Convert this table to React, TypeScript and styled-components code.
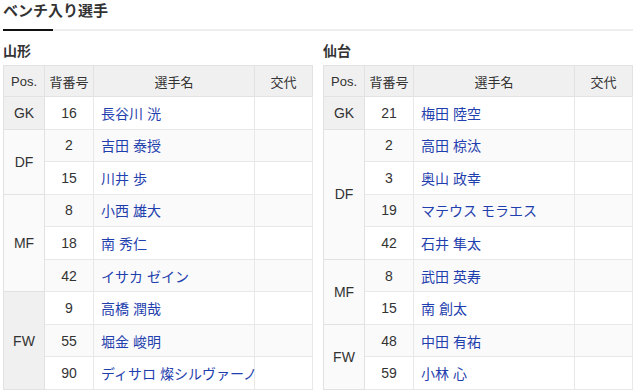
import React from "react";
import styled, { createGlobalStyle } from "styled-components";

type Player = { no: number; name: string };
type Group = { pos: string; players: Player[] };
type Team = { name: string; groups: Group[] };

const teams: Team[] = [
  {
    name: "山形",
    groups: [
      { pos: "GK", players: [{ no: 16, name: "長谷川 洸" }] },
      {
        pos: "DF",
        players: [
          { no: 2, name: "吉田 泰授" },
          { no: 15, name: "川井 歩" },
        ],
      },
      {
        pos: "MF",
        players: [
          { no: 8, name: "小西 雄大" },
          { no: 18, name: "南 秀仁" },
          { no: 42, name: "イサカ ゼイン" },
        ],
      },
      {
        pos: "FW",
        players: [
          { no: 9, name: "高橋 潤哉" },
          { no: 55, name: "堀金 峻明" },
          { no: 90, name: "ディサロ 燦シルヴァーノ" },
        ],
      },
    ],
  },
  {
    name: "仙台",
    groups: [
      { pos: "GK", players: [{ no: 21, name: "梅田 陸空" }] },
      {
        pos: "DF",
        players: [
          { no: 2, name: "高田 椋汰" },
          { no: 3, name: "奥山 政幸" },
          { no: 19, name: "マテウス モラエス" },
          { no: 42, name: "石井 隼太" },
        ],
      },
      {
        pos: "MF",
        players: [
          { no: 8, name: "武田 英寿" },
          { no: 15, name: "南 創太" },
        ],
      },
      {
        pos: "FW",
        players: [
          { no: 48, name: "中田 有祐" },
          { no: 59, name: "小林 心" },
        ],
      },
    ],
  },
];

const GlobalStyle = createGlobalStyle`
  body {
    margin: 0;
    background: #fff;
    font-family: "Liberation Sans", Arial, "Noto Sans CJK JP", sans-serif;
    color: #333;
  }
`;

export default function App() {
  return (
    <Page>
      <GlobalStyle />
      <Title>ベンチ入り選手</Title>
      <Underline>
        <UnderlineAccent />
        <UnderlineRest />
      </Underline>
      <Teams>
        {teams.map((team) => (
          <TeamBlock key={team.name} team={team} />
        ))}
      </Teams>
    </Page>
  );
}

function TeamBlock(props: { team: Team }) {
  return (
    <div>
      <TeamName>{props.team.name}</TeamName>
      <Table>
        <colgroup>
          <col style={{ width: 41 }} />
          <col style={{ width: 49 }} />
          <col />
          <col style={{ width: 58 }} />
        </colgroup>
        <thead>
          <tr>
            <Th>Pos.</Th>
            <Th>背番号</Th>
            <Th>選手名</Th>
            <Th>交代</Th>
          </tr>
        </thead>
        <tbody>
          {props.team.groups.map((group) =>
            group.players.map((p, i) => (
              <Row key={group.pos + p.no}>
                {i === 0 && <PosCell rowSpan={group.players.length}>{group.pos}</PosCell>}
                <NumCell>{p.no}</NumCell>
                <NameCell>
                  <PlayerLink>{p.name}</PlayerLink>
                </NameCell>
                <Td />
              </Row>
            ))
          )}
        </tbody>
      </Table>
    </div>
  );
}

const Page = styled.div`
  padding: 0 3px;
`;

const Title = styled.h2`
  margin: 0;
  font-size: 15px;
  line-height: 22px;
  font-weight: bold;
  color: #333;
  padding-bottom: 7px;
`;

const Underline = styled.div`
  display: flex;
  height: 2px;
`;

const UnderlineAccent = styled.div`
  width: 50px;
  background: #111;
`;

const UnderlineRest = styled.div`
  flex: 1;
  background: #eeeeee;
`;

const Teams = styled.div`
  display: grid;
  grid-template-columns: 1fr 1fr;
  column-gap: 10px;
  margin-top: 10px;
`;

const TeamName = styled.h3`
  margin: 0 0 4px;
  font-size: 14px;
  line-height: 20px;
  font-weight: bold;
  color: #333;
`;

const Table = styled.table`
  width: 100%;
  table-layout: fixed;
  border-collapse: collapse;
  border: 1px solid #dcdcdc;
  font-size: 14px;
`;

const Th = styled.th`
  height: 30px;
  padding: 0;
  background: #f0f0f0;
  border: 1px solid #e2e2e2;
  font-weight: normal;
  font-size: 13px;
  color: #333;
  text-align: center;
`;

const Row = styled.tr`
  &:nth-child(even) td {
    background: #fafafa;
  }
`;

const Td = styled.td`
  height: 31.55px;
  padding: 0;
  border: 1px solid #e8e8e8;
  background: #fff;
  text-align: center;
`;

const PosCell = styled(Td)`
  && {
    background: #f0f0f0;
  }
  border-color: #e2e2e2;
`;

const NumCell = styled(Td)``;

const NameCell = styled(Td)`
  text-align: left;
  padding-left: 7px;
  white-space: nowrap;
`;

const PlayerLink = styled.a`
  color: #1f3fae;
  text-decoration: none;
  cursor: pointer;
`;
